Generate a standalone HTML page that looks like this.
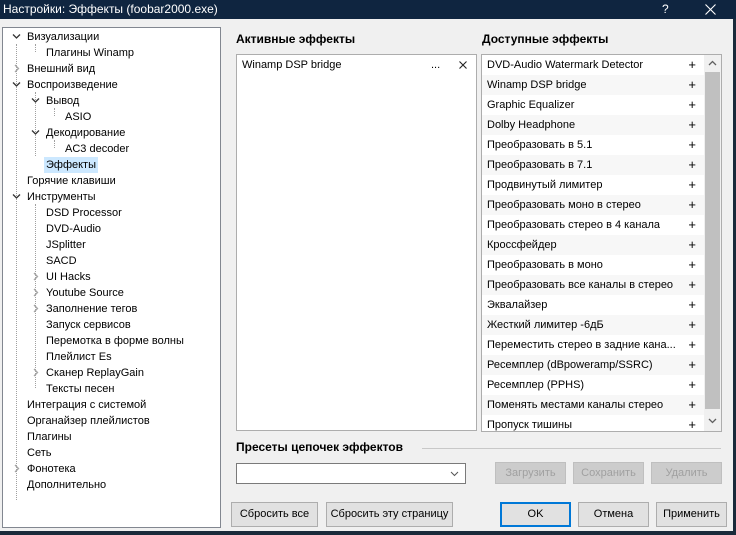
<!DOCTYPE html>
<html><head><meta charset="utf-8"><style>
*{box-sizing:border-box;margin:0;padding:0}
body{width:736px;height:535px;overflow:hidden;background:#f0f0f0;font-family:"Segoe UI","Liberation Sans","Noto Sans CJK SC",sans-serif;font-size:11px;color:#000;position:relative}
.a{position:absolute}
.title{left:0;top:0;width:736px;height:19px;background:#0f2540;color:#fff;font-size:12px;line-height:18px;padding-left:3px}
.tree{left:2px;top:27px;width:219px;height:501px;background:#fff;border:1px solid #828790}
.t{position:absolute;height:16px;line-height:16px;white-space:nowrap}
.dv{position:absolute;border-left:1px dotted #a0a0a0;width:0}
.ex{position:absolute;width:9px;height:9px}
.h{font-weight:bold;font-size:12px}
.list{background:#fff;border:1px solid #adadad}
.row{position:absolute;left:0;height:20px;line-height:20px;padding-left:5px;width:222px}
.row b{position:absolute;right:8px;font-weight:normal;font-size:13px}
.alt{background:#f7f7f7}
.btn{position:absolute;height:22px;background:#e1e1e1;border:1px solid #adadad;text-align:center;line-height:20px}
.dis{color:#a0a0a0;background:#ccc;border-color:#bfbfbf}
</style></head><body>
<svg width="0" height="0" style="position:absolute"><defs>
<symbol id="d" viewBox="0 0 9 9"><path d="M1 2.5 L4.5 6 L8 2.5" fill="none" stroke="#333" stroke-width="1.3"/></symbol>
<symbol id="r" viewBox="0 0 9 9"><path d="M3 1 L6.5 4.5 L3 8" fill="none" stroke="#a6a6a6" stroke-width="1.3"/></symbol>
</defs></svg>
<div class="a title">Настройки: Эффекты (foobar2000.exe)<span style="position:absolute;left:662px;font-size:12px">?</span>
<svg style="position:absolute;left:705px;top:4px" width="11" height="11"><path d="M0.5 0.5L10.5 10.5M10.5 0.5L0.5 10.5" stroke="#fff" stroke-width="1.1"/></svg></div>
<div class="a" style="left:733px;top:19px;width:3px;height:516px;background:#1a2a3a"></div>
<div class="a" style="left:0;top:531px;width:736px;height:4px;background:#1a2a3a"></div>

<div class="a tree">
<div class="dv" style="left:13px;top:16px;height:456px"></div>
<div class="dv" style="left:32px;top:64px;height:64px"></div>
<div class="dv" style="left:32px;top:176px;height:184px"></div>
<div class="dv" style="left:51px;top:80px;height:8px"></div>
<div class="dv" style="left:51px;top:112px;height:8px"></div>
<div class="dv" style="left:32px;top:16px;height:8px"></div>
<svg class="ex" style="left:9px;top:4px"><use href="#d"/></svg>
<div class="t" style="left:24px;top:1px">Визуализации</div>
<div class="t" style="left:43px;top:17px">Плагины Winamp</div>
<svg class="ex" style="left:9px;top:36px"><use href="#r"/></svg>
<div class="t" style="left:24px;top:33px">Внешний вид</div>
<svg class="ex" style="left:9px;top:52px"><use href="#d"/></svg>
<div class="t" style="left:24px;top:49px">Воспроизведение</div>
<svg class="ex" style="left:28px;top:68px"><use href="#d"/></svg>
<div class="t" style="left:43px;top:65px">Вывод</div>
<div class="t" style="left:62px;top:81px">ASIO</div>
<svg class="ex" style="left:28px;top:100px"><use href="#d"/></svg>
<div class="t" style="left:43px;top:97px">Декодирование</div>
<div class="t" style="left:62px;top:113px">AC3 decoder</div>
<div class="t" style="left:41px;top:129px;background:#cce8ff;padding:0 2px">Эффекты</div>
<div class="t" style="left:24px;top:145px">Горячие клавиши</div>
<svg class="ex" style="left:9px;top:164px"><use href="#d"/></svg>
<div class="t" style="left:24px;top:161px">Инструменты</div>
<div class="t" style="left:43px;top:177px">DSD Processor</div>
<div class="t" style="left:43px;top:193px">DVD-Audio</div>
<div class="t" style="left:43px;top:209px">JSplitter</div>
<div class="t" style="left:43px;top:225px">SACD</div>
<svg class="ex" style="left:28px;top:244px"><use href="#r"/></svg>
<div class="t" style="left:43px;top:241px">UI Hacks</div>
<svg class="ex" style="left:28px;top:260px"><use href="#r"/></svg>
<div class="t" style="left:43px;top:257px">Youtube Source</div>
<svg class="ex" style="left:28px;top:276px"><use href="#r"/></svg>
<div class="t" style="left:43px;top:273px">Заполнение тегов</div>
<div class="t" style="left:43px;top:289px">Запуск сервисов</div>
<div class="t" style="left:43px;top:305px">Перемотка в форме волны</div>
<div class="t" style="left:43px;top:321px">Плейлист Es</div>
<svg class="ex" style="left:28px;top:340px"><use href="#r"/></svg>
<div class="t" style="left:43px;top:337px">Сканер ReplayGain</div>
<div class="t" style="left:43px;top:353px">Тексты песен</div>
<div class="t" style="left:24px;top:369px">Интеграция с системой</div>
<div class="t" style="left:24px;top:385px">Органайзер плейлистов</div>
<div class="t" style="left:24px;top:401px">Плагины</div>
<div class="t" style="left:24px;top:417px">Сеть</div>
<svg class="ex" style="left:9px;top:436px"><use href="#r"/></svg>
<div class="t" style="left:24px;top:433px">Фонотека</div>
<div class="t" style="left:24px;top:449px">Дополнительно</div>
</div>

<div class="a h" style="left:236px;top:32px">Активные эффекты</div>
<div class="a h" style="left:482px;top:32px">Доступные эффекты</div>
<div class="a list" style="left:236px;top:54px;width:241px;height:377px">
<div class="row" style="width:239px;top:0">Winamp DSP bridge<span style="position:absolute;left:194px">...</span>
<svg style="position:absolute;left:222px;top:6px" width="8" height="8"><path d="M0.5 0.5L7.5 7.5M7.5 0.5L0.5 7.5" stroke="#222" stroke-width="1.1"/></svg></div>
</div>
<div class="a list" style="left:481px;top:54px;width:241px;height:378px;overflow:hidden">
<div class="row" style="top:0">DVD-Audio Watermark Detector<b>+</b></div>
<div class="row alt" style="top:20px">Winamp DSP bridge<b>+</b></div>
<div class="row" style="top:40px">Graphic Equalizer<b>+</b></div>
<div class="row alt" style="top:60px">Dolby Headphone<b>+</b></div>
<div class="row" style="top:80px">Преобразовать в 5.1<b>+</b></div>
<div class="row alt" style="top:100px">Преобразовать в 7.1<b>+</b></div>
<div class="row" style="top:120px">Продвинутый лимитер<b>+</b></div>
<div class="row alt" style="top:140px">Преобразовать моно в стерео<b>+</b></div>
<div class="row" style="top:160px">Преобразовать стерео в 4 канала<b>+</b></div>
<div class="row alt" style="top:180px">Кроссфейдер<b>+</b></div>
<div class="row" style="top:200px">Преобразовать в моно<b>+</b></div>
<div class="row alt" style="top:220px">Преобразовать все каналы в стерео<b>+</b></div>
<div class="row" style="top:240px">Эквалайзер<b>+</b></div>
<div class="row alt" style="top:260px">Жесткий лимитер -6дБ<b>+</b></div>
<div class="row" style="top:280px">Переместить стерео в задние кана...<b>+</b></div>
<div class="row alt" style="top:300px">Ресемплер (dBpoweramp/SSRC)<b>+</b></div>
<div class="row" style="top:320px">Ресемплер (PPHS)<b>+</b></div>
<div class="row alt" style="top:340px">Поменять местами каналы стерео<b>+</b></div>
<div class="row" style="top:360px">Пропуск тишины<b>+</b></div>
<div style="position:absolute;left:222px;top:0;width:17px;height:378px;background:#f0f0f0"></div>
<div style="position:absolute;left:223px;top:17px;width:15px;height:337px;background:#c0c0c0"></div>
<svg style="position:absolute;left:226px;top:5px" width="9" height="6"><path d="M1 5L4.5 1.5L8 5" fill="none" stroke="#606060" stroke-width="1.3"/></svg>
<svg style="position:absolute;left:226px;top:363px" width="9" height="6"><path d="M1 1L4.5 4.5L8 1" fill="none" stroke="#606060" stroke-width="1.3"/></svg>
</div>

<div class="a h" style="left:236px;top:440px">Пресеты цепочек эффектов</div>
<div class="a" style="left:422px;top:448px;width:299px;height:1px;background:#c8c8c8"></div>
<div class="a" style="left:236px;top:463px;width:230px;height:21px;background:#fff;border:1px solid #7a7a7a">
<svg style="position:absolute;right:6px;top:7px" width="9" height="6"><path d="M1 1L4.5 4.5L8 1" fill="none" stroke="#555" stroke-width="1"/></svg></div>
<div class="btn dis" style="left:495px;top:462px;width:71px">Загрузить</div>
<div class="btn dis" style="left:573px;top:462px;width:71px">Сохранить</div>
<div class="btn dis" style="left:651px;top:462px;width:71px">Удалить</div>
<div class="btn" style="left:231px;top:502px;width:87px;height:25px;line-height:23px">Сбросить все</div>
<div class="btn" style="left:326px;top:502px;width:127px;height:25px;line-height:23px">Сбросить эту страницу</div>
<div class="btn" style="left:500px;top:502px;width:71px;height:25px;line-height:21px;border:2px solid #0078d7">OK</div>
<div class="btn" style="left:578px;top:502px;width:71px;height:25px;line-height:23px">Отмена</div>
<div class="btn" style="left:656px;top:502px;width:71px;height:25px;line-height:23px">Применить</div>
</body></html>
